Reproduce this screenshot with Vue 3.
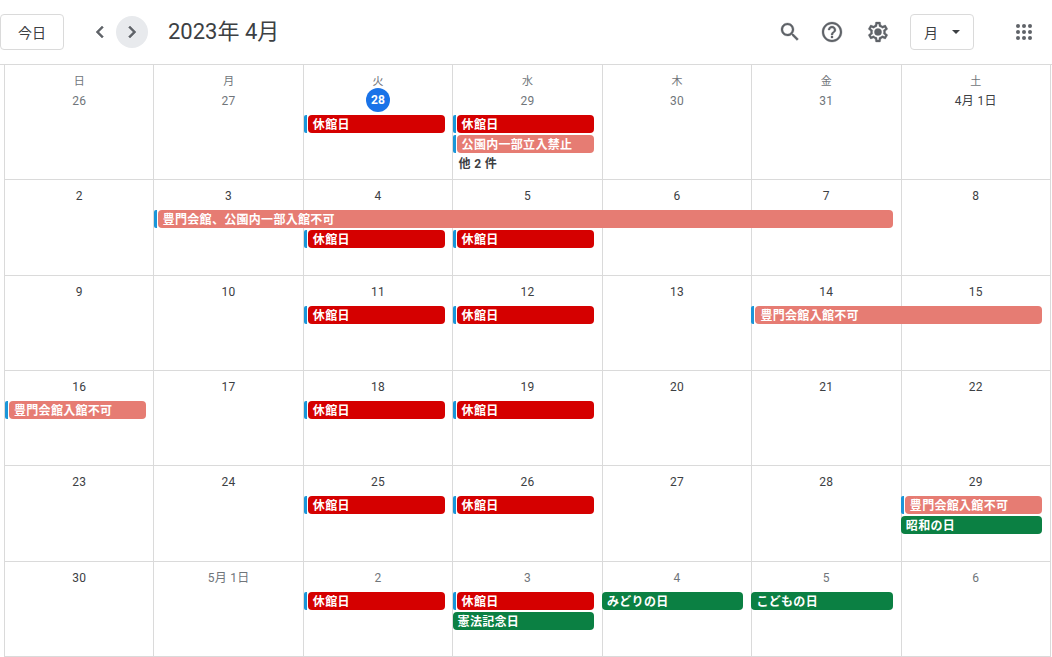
<template>
  <div class="calendar">
    <header class="toolbar">
      <button class="btn today">今日</button>
      <div class="nav">
        <span class="nav-icon">
          <svg viewBox="0 0 24 24" width="24" height="24"><path d="M15.41 7.41L14 6l-6 6 6 6 1.41-1.41L10.83 12z" /></svg>
        </span>
        <span class="nav-icon active">
          <svg viewBox="0 0 24 24" width="24" height="24"><path d="M10 6L8.59 7.41 13.17 12l-4.58 4.59L10 18l6-6z" /></svg>
        </span>
      </div>
      <h1 class="title">2023年 4月</h1>
      <div class="tools">
        <svg class="tool search" viewBox="0 0 24 24" width="24" height="24"><path d="M15.5 14h-.79l-.28-.27C15.41 12.59 16 11.11 16 9.5 16 5.91 13.09 3 9.5 3S3 5.91 3 9.5 5.91 16 9.5 16c1.61 0 3.09-.59 4.23-1.57l.27.28v.79l5 4.99L20.49 19l-4.99-5zm-6 0C7.01 14 5 11.99 5 9.5S7.01 5 9.5 5 14 7.01 14 9.5 11.99 14 9.5 14z" /></svg>
        <svg class="tool help" viewBox="0 0 24 24" width="24" height="24"><path d="M11 18h2v-2h-2v2zm1-16C6.48 2 2 6.48 2 12s4.48 10 10 10 10-4.48 10-10S17.52 2 12 2zm0 18c-4.41 0-8-3.59-8-8s3.59-8 8-8 8 3.59 8 8-3.59 8-8 8zm0-14c-2.21 0-4 1.79-4 4h2c0-1.1.9-2 2-2s2 .9 2 2c0 2-3 1.75-3 5h2c0-2.25 3-2.5 3-5 0-2.21-1.79-4-4-4z" /></svg>
        <svg class="tool gear" viewBox="0 0 24 24" width="24" height="24">
          <path d="M19.43 12.98c.04-.32.07-.64.07-.98 0-.34-.03-.66-.07-.98l2.11-1.65c.19-.15.24-.42.12-.64l-2-3.46c-.09-.16-.26-.25-.44-.25-.06 0-.12.01-.17.03l-2.49 1c-.52-.4-1.08-.73-1.69-.98l-.38-2.65C14.46 2.18 14.25 2 14 2h-4c-.25 0-.46.18-.49.42l-.38 2.65c-.61.25-1.17.59-1.69.98l-2.49-1c-.06-.02-.12-.03-.18-.03-.17 0-.34.09-.43.25l-2 3.46c-.13.22-.07.49.12.64l2.11 1.65c-.04.32-.07.65-.07.98 0 .33.03.66.07.98l-2.11 1.65c-.19.15-.24.42-.12.64l2 3.46c.09.16.26.25.44.25.06 0 .12-.01.17-.03l2.49-1c.52.4 1.08.73 1.69.98l.38 2.65c.03.24.24.42.49.42h4c.25 0 .46-.18.49-.42l.38-2.65c.61-.25 1.17-.59 1.69-.98l2.49 1c.06.02.12.03.18.03.17 0 .34-.09.43-.25l2-3.46c.12-.22.07-.49-.12-.64l-2.11-1.65zm-1.98-1.71c.04.31.05.52.05.73 0 .21-.02.43-.05.73l-.14 1.13.89.7 1.08.84-.7 1.21-1.27-.51-1.04-.42-.9.68c-.43.32-.84.56-1.25.73l-1.06.43-.16 1.13-.2 1.35h-1.4l-.19-1.35-.16-1.13-1.06-.43c-.43-.18-.83-.41-1.23-.71l-.91-.7-1.06.43-1.27.51-.7-1.21 1.08-.84.89-.7-.14-1.13c-.03-.31-.05-.54-.05-.74s.02-.43.05-.73l.14-1.13-.89-.7-1.08-.84.7-1.21 1.27.51 1.04.42.9-.68c.43-.32.84-.56 1.25-.73l1.06-.43.16-1.13.2-1.35h1.39l.19 1.35.16 1.13 1.06.43c.43.18.83.41 1.23.71l.91.7 1.06-.43 1.27-.51.7 1.21-1.07.85-.89.7.14 1.13z" />
          <circle cx="12" cy="12" r="3.6" />
        </svg>
      </div>
      <button class="btn view">
        <span>月</span>
        <svg viewBox="0 0 8 4" width="8" height="4"><path d="M0 0l4 4 4-4z" /></svg>
      </button>
      <svg class="apps" viewBox="0 0 16 16" width="16" height="16">
        <template v-for="y in [2, 8, 14]" :key="y">
          <circle v-for="x in [2, 8, 14]" :key="x" :cx="x" :cy="y" r="2" />
        </template>
      </svg>
    </header>

    <main class="month">
      <section v-for="(week, w) in weeks" :key="w" class="week" :class="{ first: w === 0 }">
        <div v-for="(day, d) in week.days" :key="d" class="day" :style="{ gridColumn: d + 1 }">
          <span v-if="w === 0" class="weekday">{{ names[d] }}</span>
          <span class="date" :class="{ muted: day.muted, today: day.today }">{{ day.label }}</span>
        </div>
        <div
          v-for="(ev, i) in week.events"
          :key="i"
          class="event"
          :class="[ev.type, { nudge: ev.col === 1 || ev.col === 3 }]"
          :style="{ gridColumn: `${ev.col} / span ${ev.span || 1}`, gridRow: ev.row + 1 }"
        >
          <span class="event-body">{{ ev.text }}</span>
        </div>
      </section>
    </main>
  </div>
</template>

<script setup>
const names = ["日", "月", "火", "水", "木", "金", "土"];

const closed = (col, row = 1) => ({ col, row, type: "red", text: "休館日" });
const noEntry = (col, row = 1, span = 1) => ({ col, row, span, type: "salmon", text: "豊門会館入館不可" });
const holiday = (col, row, text) => ({ col, row, type: "green", text });

const mk = (labels, mutedFn, extra = {}) =>
  labels.map((label, i) => ({ label: String(label), muted: mutedFn(i), today: extra.today === i }));

const weeks = [
  {
    days: mk([26, 27, 28, 29, 30, 31, "4月 1日"], (i) => i < 6, { today: 2 }),
    events: [
      closed(3),
      closed(4),
      { col: 4, row: 2, type: "salmon", text: "公園内一部立入禁止" },
      { col: 4, row: 3, type: "more", text: "他 2 件" },
    ],
  },
  {
    days: mk([2, 3, 4, 5, 6, 7, 8], () => false),
    events: [
      { col: 2, row: 1, span: 5, type: "salmon", text: "豊門会館、公園内一部入館不可" },
      closed(3, 2),
      closed(4, 2),
    ],
  },
  {
    days: mk([9, 10, 11, 12, 13, 14, 15], () => false),
    events: [closed(3), closed(4), noEntry(6, 1, 2)],
  },
  {
    days: mk([16, 17, 18, 19, 20, 21, 22], () => false),
    events: [noEntry(1), closed(3), closed(4)],
  },
  {
    days: mk([23, 24, 25, 26, 27, 28, 29], () => false),
    events: [closed(3), closed(4), noEntry(7), holiday(7, 2, "昭和の日")],
  },
  {
    days: mk([30, "5月 1日", 2, 3, 4, 5, 6], (i) => i > 0),
    events: [
      closed(3),
      closed(4),
      holiday(4, 2, "憲法記念日"),
      holiday(5, 1, "みどりの日"),
      holiday(6, 1, "こどもの日"),
    ],
  },
];
</script>

<style scoped>
.calendar {
  width: 1052px;
  height: 657px;
  overflow: hidden;
  background: #fff;
  font-family: Roboto, "Noto Sans CJK JP", sans-serif;
  color: #3c4043;
}

/* toolbar */
.toolbar {
  display: flex;
  align-items: center;
  height: 64px;
  border-bottom: 1px solid #dadada;
}

.btn {
  display: flex;
  align-items: center;
  height: 36px;
  width: 64px;
  box-sizing: border-box;
  background: #fff;
  border: 1px solid #dadada;
  border-radius: 4px;
  font: inherit;
  font-size: 14px;
  color: #3c4043;
}

.today {
  justify-content: center;
  padding: 0;
}

.nav {
  display: flex;
  margin-left: 20px;
}

.nav-icon {
  display: flex;
  align-items: center;
  justify-content: center;
  width: 32px;
  height: 32px;
  border-radius: 50%;
  fill: #5f6368;
  stroke: #5f6368;
  stroke-width: 0.5;
}

.nav-icon.active {
  background: #e8eaed;
}

.title {
  margin: 0 0 0 20px;
  font-size: 22px;
  font-weight: 400;
  line-height: 28px;
  white-space: nowrap;
}

.tools {
  display: flex;
  align-items: center;
  margin-left: auto;
  fill: #5f6368;
  stroke: #5f6368;
  stroke-width: 0.3;
}

.help {
  margin-left: 18px;
}

.gear {
  margin-left: 22px;
}

.view {
  margin-left: 20px;
  padding: 0 0 0 13px;
  fill: #3c4043;
}

.view svg {
  margin-left: 14px;
}

.apps {
  margin: 0 20px 0 42px;
  fill: #5f6368;
}

/* month grid */
.month {
  width: 1047px;
  margin-left: 4px;
  display: grid;
  grid-template-rows: 114px 96px 95px 95px 96px 95px;
  box-sizing: border-box;
  border-right: 1px solid #dadada;
  border-bottom: 1px solid #dadada;
}

.week {
  display: grid;
  grid-template-columns: repeat(7, minmax(0, 1fr));
  grid-template-rows: 28px repeat(3, 18px) 1fr;
  row-gap: 2px;
  border-top: 1px solid #dadada;
}

.week.first {
  grid-template-rows: 48px repeat(3, 18px) 1fr;
  border-top: 0;
}

.day {
  grid-row: 1 / -1;
  display: flex;
  flex-direction: column;
  align-items: center;
  padding-top: 4px;
  border-left: 1px solid #dadada;
  min-width: 0;
}

.first .day {
  padding-top: 10px;
}

.first .date {
  margin-top: -1px;
  line-height: 26px;
}

.weekday {
  font-size: 11px;
  line-height: 14px;
  color: #70757a;
}

.date {
  height: 24px;
  min-width: 24px;
  font-size: 12px;
  line-height: 24px;
  letter-spacing: 0.3px;
  text-align: center;
  white-space: nowrap;
}

.date.muted {
  color: #70757a;
}

.first .date.today {
  background: #1a73e8;
  border-radius: 50%;
  color: #fff;
  font-weight: 700;
  line-height: 24px;
}

/* events */
.event {
  display: flex;
  margin: 0 7.7px 0 0.3px;
  height: 18px;
  font-size: 12px;
  font-weight: 700;
  line-height: 20px;
  letter-spacing: 0.3px;
  color: #fff;
  white-space: nowrap;
  min-width: 0;
}

.event.nudge {
  margin-left: 1px;
}

.event-body {
  flex: 1;
  height: 18px;
  padding-left: 5px;
  border-radius: 4px;
  overflow: hidden;
}

.red::before,
.salmon::before {
  content: "";
  flex: 0 0 3px;
  margin-right: 1px;
  background: #1a96d9;
  border-radius: 2px 0 0 2px;
}

.red .event-body {
  background: #d50000;
}

.salmon .event-body {
  background: #e67c73;
}

.green .event-body {
  background: #0b8043;
}

.more {
  line-height: 18px;
  color: #3c4043;
}

.more .event-body {
  padding-left: 6px;
}
</style>
